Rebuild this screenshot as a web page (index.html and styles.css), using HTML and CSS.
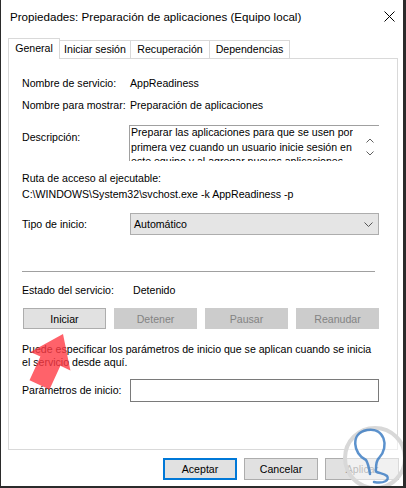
FILE: index.html
```html
<!DOCTYPE html>
<html lang="es">
<head>
<meta charset="utf-8">
<title>Propiedades</title>
<link rel="stylesheet" href="styles.css">
</head>
<body>
<div class="window">
  <div class="titlebar">
    <span class="title">Propiedades: Preparación de aplicaciones (Equipo local)</span>
    <svg class="close" width="11" height="11" viewBox="0 0 11 11"><path d="M0.5 0.5L10.5 10.5M10.5 0.5L0.5 10.5" stroke="#000" stroke-width="1" fill="none"/></svg>
  </div>
  <div class="tabs">
    <div class="tab active t1">General</div>
    <div class="tab t2">Iniciar sesión</div>
    <div class="tab t3">Recuperación</div>
    <div class="tab t4">Dependencias</div>
  </div>
  <div class="panel">
    <div class="row r-name"><span class="label">Nombre de servicio:</span><span class="value">AppReadiness</span></div>
    <div class="row r-display"><span class="label">Nombre para mostrar:</span><span class="value">Preparación de aplicaciones</span></div>
    <div class="row r-desc">
      <span class="label desc-label">Descripción:</span>
      <div class="descbox">
        <div class="desctext">Preparar las aplicaciones para que se usen por<br>primera vez cuando un usuario inicie sesión en<br>este equipo y al agregar nuevas aplicaciones</div>
        <div class="scroll">
          <svg width="8" height="5" viewBox="0 0 8 5"><path d="M0.5 4.5L4 1L7.5 4.5" stroke="#606060" fill="none"/></svg>
          <svg width="8" height="5" viewBox="0 0 8 5"><path d="M0.5 0.5L4 4L7.5 0.5" stroke="#606060" fill="none"/></svg>
        </div>
      </div>
    </div>
    <div class="line r-path-label">Ruta de acceso al ejecutable:</div>
    <div class="line r-path">C:\WINDOWS\System32\svchost.exe -k AppReadiness -p</div>
    <div class="row r-type">
      <span class="label">Tipo de inicio:</span>
      <div class="combo"><span>Automático</span><svg width="9" height="5" viewBox="0 0 9 5"><path d="M0.5 0.5L4.5 4.5L8.5 0.5" stroke="#555" fill="none"/></svg></div>
    </div>
    <div class="separator"></div>
    <div class="row r-status"><span class="label">Estado del servicio:</span><span class="value status">Detenido</span></div>
    <div class="buttons">
      <div class="btn">Iniciar</div>
      <div class="btn disabled">Detener</div>
      <div class="btn disabled">Pausar</div>
      <div class="btn disabled">Reanudar</div>
    </div>
    <p class="hint">Puede especificar los parámetros de inicio que se aplican cuando se inicia<br>el servicio desde aquí.</p>
    <div class="row r-params"><span class="label">Parámetros de inicio:</span><div class="input"></div></div>
  </div>
  <div class="footer">
    <div class="btn fbtn default">Aceptar</div>
    <div class="btn fbtn">Cancelar</div>
    <div class="btn fbtn apply">Aplicar</div>
  </div>
  <svg class="arrow" width="80" height="100" viewBox="0 300 80 100">
    <polygon points="63,334 70.4,370.4 60.4,365.8 49.5,389.4 29.5,380.2 40.4,356.6 30.4,352" fill="#ff3b45" fill-opacity="0.8"/>
  </svg>
  <svg class="watermark" width="76" height="78" viewBox="330 410 76 78">
    <circle cx="375" cy="458" r="30" fill="#ffffff" fill-opacity="0.55" stroke="#d8d8d8" stroke-width="4"/>
    <path d="M370 474 C369 468 368 463 366 460 C353 454 350 433 367 430 C384 427 390 446 379 458 C376 461 376 465 376 469 C374 474 383 472 387 476 C390 480 384 484 374 482" stroke="#3f7fc4" stroke-opacity="0.85" stroke-width="2.5" fill="none" stroke-linecap="round"/>
  </svg>
</div>
</body>
</html>
```
FILE: styles.css
```css
* { box-sizing: border-box; }
html, body { margin: 0; padding: 0; background: #fff; }
body {
  font-family: "Liberation Sans", Arial, sans-serif;
  font-size: 10.6px;
  color: #000;
}
.window {
  position: relative;
  width: 406px;
  height: 488px;
  background: #fff;
  border-left: 1px solid #2b2b2b;
  border-right: 3px solid #2b2b2b;
  border-bottom: 2px solid #2b2b2b;
  overflow: hidden;
}
.titlebar {
  height: 32px;
  display: flex;
  align-items: center;
  justify-content: space-between;
  padding: 0 8px 0 9px;
}
.title { font-size: 11.6px; color: #000; }
.close { display: block; }
.tabs {
  height: 26px;
  display: flex;
  align-items: flex-end;
  padding-left: 7px;
}
.tab {
  height: 18px;
  border: 1px solid #d9d9d9;
  border-bottom: none;
  background: #fff;
  text-align: center;
  line-height: 15px;
  padding-top: 1px;
  margin-left: -1px;
  white-space: nowrap;
}
.tab.t1 { margin-left: 0; width: 52px; }
.tab.t2 { width: 72px; }
.tab.t3 { width: 80px; }
.tab.t4 { width: 81px; }
.tab.active {
  position: relative;
  z-index: 1;
  height: 21px;
  margin-bottom: -1px;
  padding-top: 2px;
}
.panel {
  margin-left: 7px;
  width: 390px;
  height: 392px;
  border: 1px solid #d9d9d9;
  padding: 17px 18px 0 13px;
  display: flex;
  flex-direction: column;
}
.row {
  display: grid;
  grid-template-columns: 108px 1fr;
  line-height: 15px;
  white-space: nowrap;
}
.r-display { margin-top: 7px; }
.r-desc { margin-top: 12px; align-items: start; }
.desc-label { margin-top: 5px; }
.descbox {
  margin-left: -1px;
  width: 250px;
  height: 36px;
  border-top: 1px solid #a0a0a0;
  border-left: 1px solid #a0a0a0;
  display: flex;
  justify-content: space-between;
  overflow: hidden;
}
.desctext {
  padding-left: 1px;
  line-height: 14.5px;
  margin-top: -1px;
  white-space: nowrap;
  overflow: hidden;
}
.scroll {
  width: 18px;
  display: flex;
  flex-direction: column;
  align-items: center;
  padding-top: 12px;
  gap: 8px;
  margin-right: 0;
}
.scroll svg { display: block; }
.line { line-height: 15px; white-space: nowrap; }
.r-path-label { margin-top: 10px; }
.r-path { margin-top: 1px; }
.r-type { margin-top: 11px; align-items: center; }
.combo {
  height: 22px;
  background: #e5e5e5;
  border: 1px solid #adadad;
  display: flex;
  align-items: center;
  justify-content: space-between;
  padding: 0 5px 0 3px;
}
.combo svg { display: block; }
.separator {
  margin-top: 36px;
  height: 1px;
  background: #a0a0a0;
  margin-right: 4px;
}
.r-status { margin-top: 11px; }
.status { padding-left: 3px; }
.buttons {
  margin-top: 10px;
  margin-left: 1px;
  display: grid;
  grid-template-columns: repeat(4, 83px);
  gap: 8px;
}
.btn {
  height: 21px;
  background: #e1e1e1;
  border: 1px solid #adadad;
  display: flex;
  align-items: center;
  justify-content: center;
  white-space: nowrap;
}
.btn.disabled {
  background: #cccccc;
  border-color: #cccccc;
  color: #838383;
}
.hint {
  margin: 14px 0 0;
  line-height: 13px;
  white-space: nowrap;
}
.r-params { margin-top: 10px; align-items: center; }
.input {
  height: 23px;
  border: 1px solid #7a7a7a;
  background: #fff;
}
.footer {
  margin-top: 8px;
  display: flex;
  justify-content: flex-end;
  gap: 7px;
  padding-right: 4px;
}
.fbtn { width: 74px; height: 22px; }
.fbtn.default { border: 2px solid #0078d7; }
.fbtn.apply { color: #6d6d6d; }
.arrow {
  position: absolute;
  left: -1px;
  top: 300px;
  pointer-events: none;
}
.watermark {
  position: absolute;
  left: 329px;
  top: 410px;
  pointer-events: none;
}
```
